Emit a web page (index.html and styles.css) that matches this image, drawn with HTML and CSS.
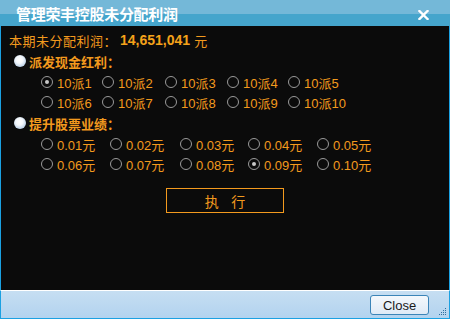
FILE: index.html
```html
<!DOCTYPE html>
<html lang="zh-CN">
<head>
    <meta charset="UTF-8">
    <title>管理荣丰控股未分配利润</title>
    <link rel="stylesheet" href="styles.css">
</head>
<body>
<div class="ventana">
    <div class="titulo">
        <span>管理荣丰控股未分配利润</span>
        <svg class="cerrar" width="11" height="10" viewBox="0 0 11 10">
            <path d="M1.5 1 L9.5 9 M9.5 1 L1.5 9" stroke="#fff" stroke-width="2.4" stroke-linecap="square"/>
        </svg>
    </div>

    <div class="contenido">
        <div class="fila resumen">本期未分配利润：<b class="numero">14,651,041</b>&nbsp;元</div>

        <label class="fila grupo">
            <input type="radio" name="tipo" class="bola" checked>
            <span>派发现金红利：</span>
        </label>
        <div class="opciones cols-a">
            <label><input type="radio" name="pai" class="circulo" checked>10派1</label>
            <label><input type="radio" name="pai" class="circulo">10派2</label>
            <label><input type="radio" name="pai" class="circulo">10派3</label>
            <label><input type="radio" name="pai" class="circulo">10派4</label>
            <label><input type="radio" name="pai" class="circulo">10派5</label>
            <label><input type="radio" name="pai" class="circulo">10派6</label>
            <label><input type="radio" name="pai" class="circulo">10派7</label>
            <label><input type="radio" name="pai" class="circulo">10派8</label>
            <label><input type="radio" name="pai" class="circulo">10派9</label>
            <label><input type="radio" name="pai" class="circulo">10派10</label>
        </div>

        <label class="fila grupo">
            <input type="radio" name="tipo2" class="bola" checked>
            <span>提升股票业绩：</span>
        </label>
        <div class="opciones cols-b">
            <label><input type="radio" name="ye" class="circulo">0.01元</label>
            <label><input type="radio" name="ye" class="circulo">0.02元</label>
            <label><input type="radio" name="ye" class="circulo">0.03元</label>
            <label><input type="radio" name="ye" class="circulo">0.04元</label>
            <label><input type="radio" name="ye" class="circulo">0.05元</label>
            <label><input type="radio" name="ye" class="circulo">0.06元</label>
            <label><input type="radio" name="ye" class="circulo">0.07元</label>
            <label><input type="radio" name="ye" class="circulo">0.08元</label>
            <label><input type="radio" name="ye" class="circulo" checked>0.09元</label>
            <label><input type="radio" name="ye" class="circulo">0.10元</label>
        </div>

        <button class="ejecutar">执&nbsp;&nbsp;&nbsp;&nbsp;行</button>
    </div>

    <div class="pie">
        <button class="boton-cerrar">Close</button>
        <svg class="agarre" width="8" height="8" viewBox="0 0 8 8">
            <g fill="#2f6f9f">
                <rect x="6" y="0" width="1" height="1"/>
                <rect x="4" y="2" width="1" height="1"/><rect x="6" y="2" width="1" height="1"/>
                <rect x="2" y="4" width="1" height="1"/><rect x="4" y="4" width="1" height="1"/><rect x="6" y="4" width="1" height="1"/>
                <rect x="0" y="6" width="1" height="1"/><rect x="2" y="6" width="1" height="1"/><rect x="4" y="6" width="1" height="1"/><rect x="6" y="6" width="1" height="1"/>
            </g>
        </svg>
    </div>
</div>
</body>
</html>
```

FILE: styles.css
```css
body {
    margin: 0;
    font-family: "Liberation Sans", "Noto Sans CJK SC", sans-serif;
    background: #fff;
}
.ventana {
    width: 450px;
    height: 319px;
    display: flex;
    flex-direction: column;
    box-sizing: border-box;
}
.titulo {
    height: 26px;
    flex: none;
    display: flex;
    align-items: center;
    justify-content: space-between;
    padding: 0 21px 0 16px;
    background: linear-gradient(#74b8d8 0, #74b8d8 14px, #45a5cc 14px, #45a5cc 100%);
    color: #fff;
    font-weight: bold;
    font-size: 15px;
    letter-spacing: -0.3px;
}
.cerrar {
    margin-top: 3px;
}
.contenido {
    flex: 1;
    background: #0b0b0b;
    border-left: 1px solid #1ba1e2;
    border-right: 1px solid #1ba1e2;
    padding: 4px 0 0 8px;
    color: #f39a1e;
    font-size: 13px;
    display: flex;
    flex-direction: column;
}
.fila {
    height: 20px;
    display: flex;
    align-items: center;
}
.resumen {
    letter-spacing: 0.5px;
}
.numero {
    color: #f5a21a;
    font-size: 14px;
    letter-spacing: 0;
    margin-left: 3px;
}
.grupo {
    margin-top: 1px;
    padding-left: 5px;
    font-weight: bold;
}
.bola {
    appearance: none;
    margin: 0 3px 0 0;
    width: 12px;
    height: 12px;
    border-radius: 50%;
    background: radial-gradient(circle at 45% 40%, #ffffff 0, #f4f8fc 35%, #b9cfe6 75%, #7f9fc4 100%);
}
.opciones {
    display: grid;
    grid-auto-rows: 20px;
    margin: 1px 0 0 32px;
}
.cols-a {
    grid-template-columns: 61px 63px 62px 61px 70px;
}
.cols-b {
    grid-template-columns: 69px 70px 68px 69px 72px;
}
.opciones label {
    display: flex;
    align-items: center;
    white-space: nowrap;
}
.circulo {
    appearance: none;
    margin: 0 4px 0 0;
    width: 12px;
    height: 12px;
    border-radius: 50%;
    border: 1px solid #9a9a9a;
    box-sizing: border-box;
    background: #0b0b0b;
    display: grid;
    place-content: center;
}
.circulo:checked::before {
    content: "";
    width: 4px;
    height: 4px;
    border-radius: 50%;
    background: #c8c8c8;
}
.ejecutar {
    align-self: center;
    margin: 14px 0 0 -8px;
    width: 118px;
    height: 25px;
    background: #0b0b0b;
    border: 1px solid #f39a1e;
    color: #f39a1e;
    font-family: "Noto Sans CJK SC", sans-serif;
    font-size: 14px;
    padding: 0;
}
.pie {
    height: 29px;
    flex: none;
    box-sizing: border-box;
    border-top: 1px solid #ffffff;
    border-left: 1px solid #1ba1e2;
    border-right: 1px solid #1ba1e2;
    border-bottom: 1px solid #1ba1e2;
    background: linear-gradient(#c6def2, #b2d3ef);
    display: flex;
    align-items: center;
    justify-content: flex-end;
    position: relative;
    padding-right: 20px;
}
.boton-cerrar {
    width: 59px;
    height: 20px;
    margin-top: 1px;
    border: 1px solid #3b84b8;
    border-radius: 3px;
    background: linear-gradient(#f4f8fc, #dfeaf6);
    color: #1a1a1a;
    font-family: "Liberation Sans", sans-serif;
    font-size: 13px;
    padding: 0;
}
.agarre {
    position: absolute;
    right: 2px;
    bottom: 2px;
}
```
